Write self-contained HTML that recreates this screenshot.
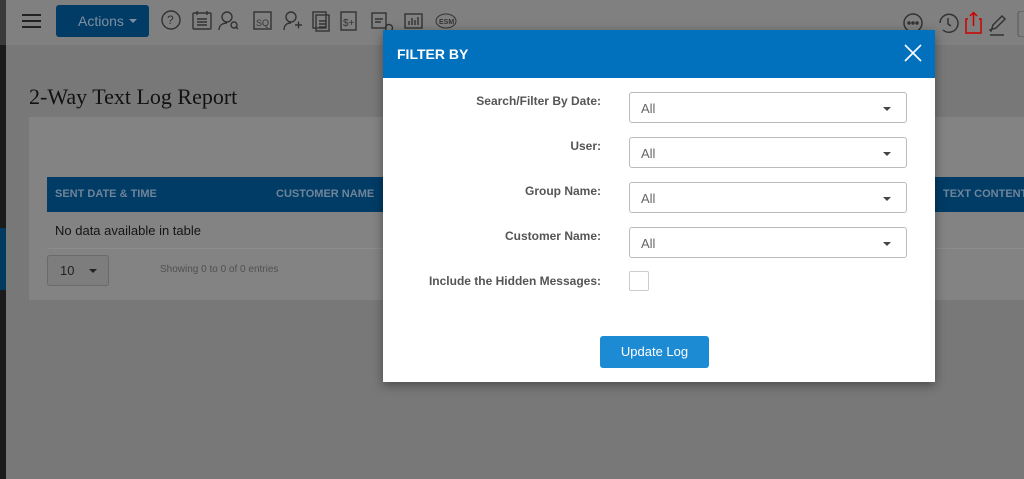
<!DOCTYPE html>
<html><head><style>
*{margin:0;padding:0;box-sizing:border-box}
body{width:1024px;height:479px;overflow:hidden;background:#787878;font-family:"Liberation Sans",sans-serif;position:relative}
.top{position:absolute;left:0;top:0;width:1024px;height:45px;background:#808080}
.side{position:absolute;left:0;top:45px;width:6px;height:434px;background:#1b1b1b}
.side2{position:absolute;left:0;top:0;width:6px;height:45px;background:#3a3a3a}
.sideb{position:absolute;left:0;top:228px;width:6px;height:62px;background:#013a60}
.ham{position:absolute;left:22px;top:14px;width:19px}
.ham i{display:block;height:2px;background:#222;margin-bottom:4px}
.act{position:absolute;left:56px;top:5px;width:93px;height:32px;background:#003c66;border-radius:3px;color:#7f8ea0;font-size:14px;line-height:32px;padding-left:22px}
.act:after{content:"";position:absolute;right:12px;top:14px;border:4px solid transparent;border-top-color:#7f8ea0}
.ic{position:absolute;top:9px}
h1{position:absolute;left:29px;top:84px;font-family:"Liberation Serif",serif;font-weight:normal;font-size:22px;color:#111}
.card{position:absolute;left:29px;top:117px;width:1000px;height:183px;background:#838383}
.th{position:absolute;left:47px;top:177px;width:980px;height:35px;background:#003c66;color:#6f8499;font-size:11px;font-weight:bold;line-height:35px;white-space:nowrap;overflow:hidden}
.th span{white-space:nowrap}
.nd{position:absolute;left:55px;top:223px;font-size:13px;color:#151515}
.line{position:absolute;left:47px;top:248px;width:980px;height:1px;background:#8c8c8c}
.sel10{position:absolute;left:47px;top:255px;width:62px;height:31px;border:1px solid #6a6a6a;border-radius:3px;background:#7d7d7d;font-size:13px;color:#222;line-height:29px;padding-left:12px}
.sel10:after{content:"";position:absolute;left:41px;top:13px;border:4px solid transparent;border-top-color:#222}
.show{position:absolute;left:160px;top:264px;font-size:10px;color:#505050}
.modal{position:absolute;left:383px;top:30px;width:552px;height:352px;background:#fff;box-shadow:0 3px 10px rgba(0,0,0,.4)}
.mh{height:48px;background:#0171bd;color:#fff;font-weight:bold;font-size:14px;line-height:48px;padding-left:14px}
.lab{position:absolute;right:334px;font-size:12px;font-weight:bold;color:#555;text-align:right;white-space:nowrap}
.dd{position:absolute;left:246px;width:278px;height:31px;border:1px solid #bbb;border-radius:3px;font-size:13px;color:#666;line-height:31px;padding-left:11px}
.dd:after{content:"";position:absolute;right:15px;top:14px;border:4px solid transparent;border-top-color:#444}
.cb{position:absolute;left:246px;top:241px;width:20px;height:20px;border:1px solid #ccc;border-radius:2px}
.btn{position:absolute;left:217px;top:306px;width:109px;height:32px;background:#1d8ad4;border-radius:3px;color:#fff;font-size:13px;text-align:center;line-height:32px}
</style></head><body>
<div class="top"></div><div class="side2"></div><div class="side"></div><div class="sideb"></div>
<div class="ham"><i></i><i></i><i></i></div>
<div class="act">Actions</div>
<svg class="ic" style="left:160px" width="300" height="26" fill="none" stroke="#333" stroke-width="1.4">
<circle cx="11" cy="11" r="9"/><text x="7" y="15" font-size="12" fill="#333" stroke="none" font-family="Liberation Sans">?</text>
<rect x="33" y="4" width="18" height="16" rx="1"/><path d="M37 2v4M47 2v4M37 10h10M37 13h10M37 16h10"/>
<circle cx="67" cy="8" r="5"/><path d="M59 21c0-5 4-7 8-7"/><circle cx="74" cy="16" r="3"/><path d="M76 18l2 2"/>
<rect x="94" y="3" width="17" height="17"/><text x="96" y="17" font-size="9" fill="#333" stroke="none" font-family="Liberation Sans">SQ</text>
<circle cx="131" cy="8" r="5"/><path d="M124 21c0-5 3-7 7-7M135 16h7M138.5 12.5v7"/>
<rect x="153" y="3" width="13" height="16"/><rect x="156" y="6" width="13" height="16"/><path d="M159 12h7M159 15h7M159 18h7"/>
<rect x="181" y="3" width="15" height="18"/><text x="183" y="17" font-size="10" fill="#333" stroke="none" font-family="Liberation Sans">$+</text>
<rect x="212" y="4" width="14" height="15"/><path d="M215 10h8M215 13h6"/><circle cx="229" cy="19" r="3.5"/>
<rect x="245" y="5" width="17" height="14"/><path d="M249 16v-4M252 16v-7M255 16v-5M258 16v-8"/>
<ellipse cx="286" cy="12" rx="10" ry="7" stroke-width="1"/><text x="279" y="15" font-size="7" fill="#333" stroke="none" font-weight="bold" font-family="Liberation Sans">ESM</text>
</svg>
<svg class="ic" style="left:900px;top:11px" width="124" height="26" fill="none" stroke="#333" stroke-width="1.5">
<circle cx="13" cy="12" r="9"/><circle cx="9" cy="12" r="1" fill="#333"/><circle cx="13" cy="12" r="1" fill="#333"/><circle cx="17" cy="12" r="1" fill="#333"/>
<path d="M40 12a9 9 0 1 1 3 7M48 7v6l3 2"/>
<path d="M68 8h-2v14h15V8h-2M73.5 15V2M70 5l3.5-3.5L77 5" stroke="#c00"/>
<path d="M91 20l2-6 9-9 3 3-9 9-6 2zM90 24h14"/>
<rect x="118" y="0" width="10" height="26" rx="3" stroke="#666"/>
</svg>
<h1>2-Way Text Log Report</h1>
<div class="card"></div>
<div class="th"><span style="position:absolute;left:8px">SENT DATE &amp; TIME</span><span style="position:absolute;left:229px">CUSTOMER NAME</span><span style="position:absolute;left:896px">TEXT CONTENT</span></div>
<div class="nd">No data available in table</div>
<div class="line"></div>
<div class="sel10">10</div>
<div class="show">Showing 0 to 0 of 0 entries</div>
<div class="modal">
<div class="mh">FILTER BY</div>
<svg style="position:absolute;left:520px;top:13px" width="20" height="20" stroke="#fff" stroke-width="1.6"><path d="M2 2l16 16M18 2L2 18"/></svg>
<div class="lab" style="top:64px">Search/Filter By Date:</div>
<div class="dd" style="top:62px">All</div>
<div class="lab" style="top:109px">User:</div>
<div class="dd" style="top:107px">All</div>
<div class="lab" style="top:154px">Group Name:</div>
<div class="dd" style="top:152px">All</div>
<div class="lab" style="top:199px">Customer Name:</div>
<div class="dd" style="top:197px">All</div>
<div class="lab" style="top:244px">Include the Hidden Messages:</div>
<div class="cb"></div>
<div class="btn">Update Log</div>
</div>
</body></html>
